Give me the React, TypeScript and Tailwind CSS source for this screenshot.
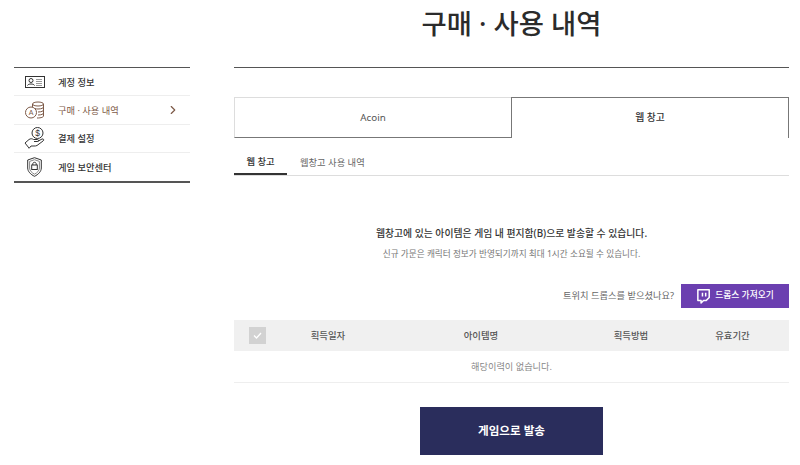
import React from "react";
import { ChevronRight } from "lucide-react";

const IconProfile = () => (
  <svg width="20" height="12" viewBox="0 0 20 12" fill="none" stroke="#333" strokeWidth="1">
    <rect x="0.5" y="0.5" width="19" height="11" />
    <circle cx="6" cy="4.500" r="2" />
    <path d="M2.500 9.500c.5-2 6.500-2 7 0" />
    <path d="M11 3.500h6M11 5.500h6M11 7.500h6M11 9.500h6" stroke="#999" />
  </svg>
);

const IconCoins = () => (
  <svg width="20" height="18" viewBox="0 0 20 18" fill="none" stroke="#7d5a48" strokeWidth="1">
    <circle cx="6" cy="11.500" r="5.500" />
    <text x="6" y="14" fontSize="7" textAnchor="middle" fill="#7d5a48" stroke="none" fontFamily="Liberation Sans">A</text>
    <ellipse cx="13" cy="3" rx="5.500" ry="2" />
    <path d="M7.500 3v3M18.500 3v12c0 1-2 2-6.500 2M18.500 6c0 1-2 2-5.500 2-1 0-2-.1-3-.4M18.500 9c0 1-2 2-5.500 2M18.500 12c0 1-2 2-5.500 2" />
  </svg>
);

const IconPay = () => (
  <svg width="22" height="22" viewBox="0 0 22 22" fill="none" stroke="#333" strokeWidth="1">
    <circle cx="13.500" cy="6" r="5.500" />
    <text x="13.500" y="9" fontSize="8.500" textAnchor="middle" fill="#333" stroke="none" fontFamily="Liberation Sans">$</text>
    <path d="M1 16l4-3.500c1.500-1 3-1 4.500 0h4c1.200 0 1.200 2 0 2H10" />
    <path d="M13.500 14.500l4.500-2.500c1.500-.5 2.500 1 1 2l-6 4.500c-1 .5-2 .5-3 .5H7l-2 2.500" />
    <path d="M1 16l4 5" />
  </svg>
);

const IconShield = () => (
  <svg width="15" height="20" viewBox="0 0 15 20" fill="none" stroke="#333" strokeWidth="1">
    <path d="M7.500.7l6.800 2.300v8c0 3.500-3 6.500-6.800 8.300C3.700 17.500.7 14.500.7 11V3z" />
    <path d="M7.500 2.700l4.900 1.700v6.600c0 2.600-2.200 4.800-4.900 6.200-2.700-1.400-4.900-3.600-4.900-6.200V4.400z" stroke="#888" />
    <rect x="4.700" y="8" width="5.600" height="4.500" />
    <path d="M5.800 8V6.800c0-2 3.400-2 3.400 0V8" />
  </svg>
);

const IconTwitch = () => (
  <svg width="14" height="15" viewBox="0 0 13 14" fill="none" stroke="#fff" strokeWidth="1.400">
    <path d="M1.700.700h10.600v7.200L9.500 10.700H7L4.700 13v-2.300H1.700z" strokeLinejoin="round" />
    <path d="M6 3.500v3.500M9 3.500v3.500" />
  </svg>
);

const MENU = [
  { label: "계정 정보", icon: <IconProfile /> },
  { label: "구매 · 사용 내역", icon: <IconCoins />, active: true },
  { label: "결제 설정", icon: <IconPay /> },
  { label: "게임 보안센터", icon: <IconShield /> },
];

const COLS = ["획득일자", "아이템명", "획득방법", "유효기간"];

export default function App() {
  return (
    <div className="h-[465px] w-[800px] overflow-hidden bg-white font-['Noto_Sans','Noto_Sans_CJK_KR',sans-serif] text-[#333]">
      <div className="flex items-start">
        <aside className="ml-[14px] mt-[67px] w-[176px] border-t border-b-2 border-t-[#555] border-b-[#555]">
          {MENU.map((m, i) => (
            <div
              key={m.label}
              className={`flex h-[28.250px] items-center ${i < 3 ? "border-b border-[#eee]" : ""}`}
            >
              <div className="flex w-[41px] justify-center">{m.icon}</div>
              <span
                className={`ml-[3px] mt-[2px] text-[9.250px] ${m.active ? "text-[#7d5a48]" : "font-medium text-[#333]"}`}
              >
                {m.label}
              </span>
              {m.active && <ChevronRight className="ml-auto mr-[10px] text-[#7d5a48]" size={14} />}
            </div>
          ))}
        </aside>

        <main className="ml-[44px] w-[555px]">
          <h1 className="flex h-[68px] items-start justify-center border-b border-[#555] text-[27.400px] font-medium leading-[48px] text-[#2b2b2b]">
            구매 · 사용 내역
          </h1>

          <div className="mt-[29px] flex h-[41px] text-[9.800px]">
            <div className="flex w-[277px] items-center justify-center border border-r-0 border-[#ddd] border-b-[#777] pt-[2px] text-[#555]">
              Acoin
            </div>
            <div className="flex flex-1 items-center justify-center border border-b-0 border-[#777] pt-[1px] font-medium">
              웹 창고
            </div>
          </div>

          <div className="mt-[11px] flex h-[27px] border-b border-[#ddd] text-[9.300px]">
            <div className="flex w-[53px] items-center justify-center border-b-2 border-[#333] pt-[1px] font-medium">웹 창고</div>
            <div className="ml-[13px] flex items-center pt-[1px] text-[#666]">웹창고 사용 내역</div>
          </div>

          <p className="mt-[49px] text-center text-[9.850px] font-medium leading-[16px]">
            웹창고에 있는 아이템은 게임 내 편지함(B)으로 발송할 수 있습니다.
          </p>
          <p className="mt-[6px] text-center text-[8.650px] leading-[14px] text-[#777]">
            신규 가문은 캐릭터 정보가 반영되기까지 최대 1시간 소요될 수 있습니다.
          </p>

          <div className="mt-[23px] flex h-[24px] items-center justify-end">
            <span className="mr-[7px] text-[9.250px] text-[#666]">트위치 드롭스를 받으셨나요?</span>
            <button className="flex h-[24px] w-[108px] items-center justify-center gap-[5px] bg-[#6b3fb0] text-[8.750px] font-medium text-white">
              <IconTwitch />
              드롭스 가져오기
            </button>
          </div>

          <div className="mt-[12px] grid h-[31px] grid-cols-[46px_96px_210px_90px_113px] items-center bg-[#f0f0f0] text-[9.400px] font-medium text-[#555]">
            <div className="flex justify-center">
              <div className="flex h-[17px] w-[17px] items-center justify-center bg-[#d2d2d2]">
                <svg width="9" height="7" viewBox="0 0 9 7" fill="none" stroke="#fff" strokeWidth="1.300">
                  <path d="M1 3.500L3.500 6 8 1" />
                </svg>
              </div>
            </div>
            {COLS.map((c) => (
              <div key={c} className="pt-[1px] text-center">
                {c}
              </div>
            ))}
          </div>
          <div className="flex h-[32px] items-center justify-center border-b border-[#eee] text-[9.200px] text-[#888]">
            해당이력이 없습니다.
          </div>

          <div className="mt-[24px] flex justify-center">
            <button className="h-[48px] w-[183px] bg-[#2a2d5c] text-[11.600px] font-bold text-white">
              게임으로 발송
            </button>
          </div>
        </main>
      </div>
    </div>
  );
}
